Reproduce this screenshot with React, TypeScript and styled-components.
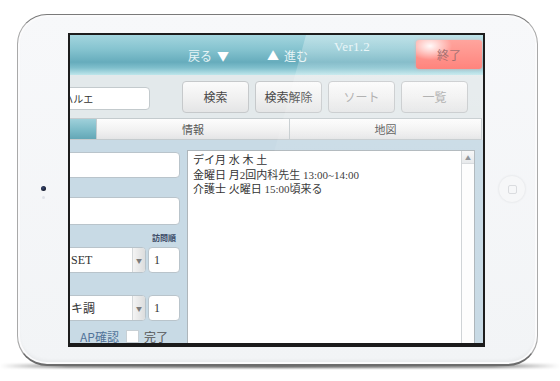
import React from "react";
import styled, { createGlobalStyle } from "styled-components";

const GlobalStyle = createGlobalStyle`
  html, body {
    margin: 0;
    padding: 0;
    background: #ffffff;
  }
  body {
    width: 560px;
    height: 381px;
    overflow: hidden;
    font-family: "Noto Sans CJK JP", "Noto Sans", sans-serif;
  }
`;

const JP = `"Noto Sans CJK JP", "Noto Sans", sans-serif`;
const SERIF_JP = `"Liberation Serif", "Noto Sans CJK JP", serif`;

function App() {
  return (
    <>
      <GlobalStyle />
      <Stage>
        <FloorShadow />
        <Tablet>
          <LeftBezel>
            <Camera />
            <Sensor />
          </LeftBezel>
          <Screen>
            <AppView>
              <Header>
                <NavText>
                  戻る<Arrow>▼</Arrow>
                </NavText>
                <NavText style={{ marginLeft: 28 }}>
                  <Arrow>▲</Arrow>進む
                </NavText>
                <Version>Ver1.2</Version>
                <QuitButton>終了</QuitButton>
              </Header>
              <Toolbar>
                <SearchInput>山田 ハルエ</SearchInput>
                <ButtonGroup>
                  {buttons.map((b) => (
                    <ToolButton key={b.label} $disabled={b.disabled}>
                      {b.label}
                    </ToolButton>
                  ))}
                </ButtonGroup>
              </Toolbar>
              <TabRow>
                <Tab $active />
                <Tab>情報</Tab>
                <Tab>地図</Tab>
              </TabRow>
              <Content>
                <LeftPanel>
                  <Field $h={26} />
                  <Field $h={28} style={{ marginTop: 19 }} />
                  <SmallLabel>訪問順</SmallLabel>
                  <SelectRow>
                    <Select>
                      <SelectText>SET</SelectText>
                      <SelectArrow>▼</SelectArrow>
                    </Select>
                    <OrderInput>1</OrderInput>
                  </SelectRow>
                  <SelectRow style={{ marginTop: 22 }}>
                    <Select>
                      <SelectText>キ調</SelectText>
                      <SelectArrow>▼</SelectArrow>
                    </Select>
                    <OrderInput>1</OrderInput>
                  </SelectRow>
                  <CheckRow>
                    <CheckLabel>AP確認</CheckLabel>
                    <CheckBox />
                    <DoneText>完了</DoneText>
                  </CheckRow>
                </LeftPanel>
                <Memo>
                  <MemoText>
                    {memoLines.map((line) => (
                      <div key={line}>{line}</div>
                    ))}
                  </MemoText>
                  <ScrollBar>
                    <ScrollUp>▲</ScrollUp>
                  </ScrollBar>
                </Memo>
              </Content>
            </AppView>
            <Glare />
          </Screen>
          <RightBezel>
            <HomeButton>
              <HomeSquare />
            </HomeButton>
          </RightBezel>
        </Tablet>
      </Stage>
    </>
  );
}

const buttons = [
  { label: "検索", disabled: false },
  { label: "検索解除", disabled: false },
  { label: "ソート", disabled: true },
  { label: "一覧", disabled: true },
];

const memoLines = [
  "デイ月 水 木 土",
  "金曜日 月2回内科先生 13:00~14:00",
  "介護士 火曜日 15:00頃来る",
];

const Stage = styled.div`
  position: relative;
  width: 560px;
  height: 381px;
  padding: 14px 0 0 17px;
  box-sizing: border-box;
`;

const FloorShadow = styled.div`
  position: absolute;
  left: 0;
  top: 364px;
  width: 560px;
  height: 4px;
  background: linear-gradient(
    90deg,
    rgba(0, 0, 0, 0) 0%,
    rgba(0, 0, 0, 0.45) 12%,
    rgba(0, 0, 0, 0.6) 50%,
    rgba(0, 0, 0, 0.45) 88%,
    rgba(0, 0, 0, 0) 100%
  );
  filter: blur(1px);
`;

const Tablet = styled.div`
  position: relative;
  display: flex;
  align-items: stretch;
  width: 521px;
  height: 352px;
  box-sizing: border-box;
  padding: 18px 0 19px;
  background: linear-gradient(180deg, #f7f8fa 0%, #f2f4f6 100%);
  border: 1px solid #a9a9a9;
  border-top-color: #7a7a7a;
  border-bottom: 2px solid #6c6c6c;
  border-radius: 30px;
  box-shadow: inset 0 0 0 2px #fbfbfc, inset 0 -3px 4px rgba(0, 0, 0, 0.06);
`;

const LeftBezel = styled.div`
  width: 50px;
  display: flex;
  flex-direction: column;
  align-items: center;
  justify-content: center;
  gap: 5px;
`;

const Camera = styled.div`
  width: 5px;
  height: 5px;
  margin-top: 6px;
  border-radius: 50%;
  background: radial-gradient(circle at 40% 40%, #3a4a78 0%, #121828 70%);
`;

const Sensor = styled.div`
  width: 3px;
  height: 3px;
  border-radius: 50%;
  background: #dfe2e8;
`;

const RightBezel = styled.div`
  flex: 1;
  display: flex;
  align-items: center;
  justify-content: center;
  padding-left: 2px;
`;

const HomeButton = styled.div`
  width: 26px;
  height: 26px;
  border-radius: 50%;
  background: #f6f7f8;
  border: 1px solid #eceef0;
  box-shadow: 0 0 2px rgba(0, 0, 0, 0.04);
  display: flex;
  align-items: center;
  justify-content: center;
`;

const HomeSquare = styled.div`
  width: 7px;
  height: 7px;
  border: 1px solid #dadcdf;
  border-radius: 2px;
`;

const Screen = styled.div`
  position: relative;
  width: 417px;
  height: 314px;
  box-sizing: border-box;
  border: 2px solid #1d1d1d;
  border-bottom: 4px solid #1b1b1b;
  overflow: hidden;
  background: #c8dae5;
`;

const AppView = styled.div`
  margin-left: -60px;
  width: 473px;
  height: 100%;
  display: flex;
  flex-direction: column;
`;

const Header = styled.div`
  height: 40px;
  flex-shrink: 0;
  display: flex;
  align-items: center;
  padding-left: 178px;
  box-sizing: border-box;
  background: linear-gradient(
    180deg,
    #a3d5de 0%,
    #86c4d0 35%,
    #66acbc 68%,
    #7fbfcc 82%,
    #bfe6eb 100%
  );
`;

const NavText = styled.span`
  display: flex;
  align-items: center;
  font-family: ${JP};
  font-size: 12px;
  color: #e6f4f6;
`;

const Arrow = styled.span`
  margin: 0 5px;
  font-size: 12px;
  color: #ffffff;
`;

const Version = styled.span`
  align-self: flex-start;
  margin-top: 4px;
  margin-left: 26px;
  font-family: "Liberation Serif", serif;
  font-size: 13px;
  letter-spacing: 0.3px;
  color: #e3f3f6;
`;

const QuitButton = styled.div`
  margin-left: auto;
  margin-right: 1px;
  width: 66px;
  height: 29px;
  margin-top: -1px;
  border-radius: 3px;
  display: flex;
  align-items: center;
  justify-content: center;
  font-family: ${JP};
  font-size: 12px;
  color: #8a4444;
  background: radial-gradient(
      ellipse 22px 14px at 14px 6px,
      rgba(255, 255, 255, 0.95),
      rgba(255, 255, 255, 0) 100%
    ),
    linear-gradient(180deg, #ff8076 0%, #ff675e 100%);
  box-shadow: 0 0 3px rgba(255, 120, 110, 0.6);
`;

const Toolbar = styled.div`
  height: 43px;
  flex-shrink: 0;
  display: flex;
  align-items: center;
  padding-left: 20px;
  box-sizing: border-box;
  background: #e3e9eb;
`;

const SearchInput = styled.div`
  width: 120px;
  height: 23px;
  margin-top: 4px;
  box-sizing: border-box;
  padding-left: 10px;
  display: flex;
  align-items: center;
  background: #ffffff;
  border: 1px solid #c3cacd;
  border-radius: 4px;
  font-family: ${JP};
  font-size: 10px;
  color: #333333;
  white-space: pre;
`;

const ButtonGroup = styled.div`
  display: flex;
  gap: 6px;
  margin-left: 32px;
`;

const ToolButton = styled.div<{ $disabled?: boolean }>`
  width: 67px;
  height: 32px;
  box-sizing: border-box;
  display: flex;
  align-items: center;
  justify-content: center;
  border: 1px solid #c6c9cb;
  border-radius: 4px;
  background: linear-gradient(180deg, #fbfbfb 0%, #f0f0f0 55%, #e4e5e6 100%);
  font-family: ${JP};
  font-size: 12px;
  color: ${(p) => (p.$disabled ? "#a6a6a6" : "#474747")};
`;

const TabRow = styled.div`
  height: 22px;
  flex-shrink: 0;
  display: grid;
  grid-template-columns: 87px 193px 192px;
  background: #e3e9eb;
`;

const Tab = styled.div<{ $active?: boolean }>`
  box-sizing: border-box;
  display: flex;
  align-items: center;
  justify-content: center;
  border: 1px solid #c4cbce;
  border-left: none;
  font-family: ${JP};
  font-size: 11px;
  color: #555555;
  background: ${(p) =>
    p.$active
      ? "linear-gradient(180deg, #9fd0da 0%, #79b9c6 60%, #64a7b6 100%)"
      : "linear-gradient(180deg, #fdfdfd 0%, #f1f1f1 60%, #e4e5e6 100%)"};
`;

const Content = styled.div`
  flex: 1;
  display: grid;
  grid-template-columns: 177px 288px;
  background: #c8dae5;
  min-height: 0;
`;

const LeftPanel = styled.div`
  display: flex;
  flex-direction: column;
  padding: 12px 7px 0 0;
`;

const Field = styled.div<{ $h: number }>`
  height: ${(p) => p.$h}px;
  box-sizing: border-box;
  background: #ffffff;
  border: 1px solid #b9c4cb;
  border-radius: 4px;
`;

const SmallLabel = styled.div`
  align-self: flex-end;
  margin: 8px 4px 0 0;
  height: 10px;
  line-height: 10px;
  font-family: ${JP};
  font-size: 8px;
  font-weight: 700;
  color: #3c4c68;
`;

const SelectRow = styled.div`
  display: flex;
  height: 26px;
  margin-top: 4px;
`;

const Select = styled.div`
  flex: 1;
  display: flex;
  box-sizing: border-box;
  background: #ffffff;
  border: 1px solid #b9c4cb;
  border-radius: 4px;
  overflow: hidden;
`;

const SelectText = styled.div`
  flex: 1;
  display: flex;
  align-items: center;
  padding-left: 60px;
  font-family: ${SERIF_JP};
  font-size: 12px;
  color: #333333;
`;

const SelectArrow = styled.div`
  width: 12px;
  display: flex;
  align-items: center;
  justify-content: center;
  font-size: 6px;
  color: #7c7c7c;
  border-left: 1px solid #d4d8da;
  background: linear-gradient(90deg, #f4f4f4, #dcdddd);
`;

const OrderInput = styled.div`
  width: 32px;
  margin-left: 2px;
  box-sizing: border-box;
  padding-left: 5px;
  display: flex;
  align-items: center;
  background: #ffffff;
  border: 1px solid #b9c4cb;
  border-radius: 4px;
  font-family: ${SERIF_JP};
  font-size: 12px;
  color: #333333;
`;

const CheckRow = styled.div`
  display: flex;
  align-items: center;
  justify-content: flex-end;
  margin-top: 7px;
  padding-right: 12px;
  gap: 5px;
`;

const CheckLabel = styled.span`
  font-family: ${JP};
  font-size: 12px;
  color: #52749a;
  margin-right: 2px;
`;

const CheckBox = styled.div`
  width: 11px;
  height: 11px;
  background: #ffffff;
  border: 1px solid #c8d0d5;
`;

const DoneText = styled.span`
  font-family: ${JP};
  font-size: 12px;
  color: #555555;
`;

const Memo = styled.div`
  position: relative;
  margin-top: 10px;
  display: flex;
  box-sizing: border-box;
  background: #ffffff;
  border: 1px solid #aeb6bb;
  border-bottom: none;
`;

const MemoText = styled.div`
  flex: 1;
  padding: 2px 5px;
  font-family: ${SERIF_JP};
  font-size: 11px;
  line-height: 14.5px;
  color: #333333;
  white-space: pre;
`;

const ScrollBar = styled.div`
  width: 12px;
  border-left: 1px solid #cfd3d6;
  background: #fdfdfd;
`;

const ScrollUp = styled.div`
  height: 12px;
  display: flex;
  align-items: center;
  justify-content: center;
  font-size: 6px;
  color: #8a8f94;
  background: linear-gradient(180deg, #f6f7f8, #e6e8ea);
  border-bottom: 1px solid #d6d9dc;
`;

const Glare = styled.div`
  position: absolute;
  inset: 0;
  pointer-events: none;
  clip-path: polygon(236px 0, 100% 0, 100% 100%, 152px 100%);
  background: linear-gradient(
    180deg,
    rgba(255, 255, 255, 0.3) 0%,
    rgba(255, 255, 255, 0.16) 14%,
    rgba(255, 255, 255, 0.06) 40%,
    rgba(255, 255, 255, 0) 100%
  );
`;

export default App;
